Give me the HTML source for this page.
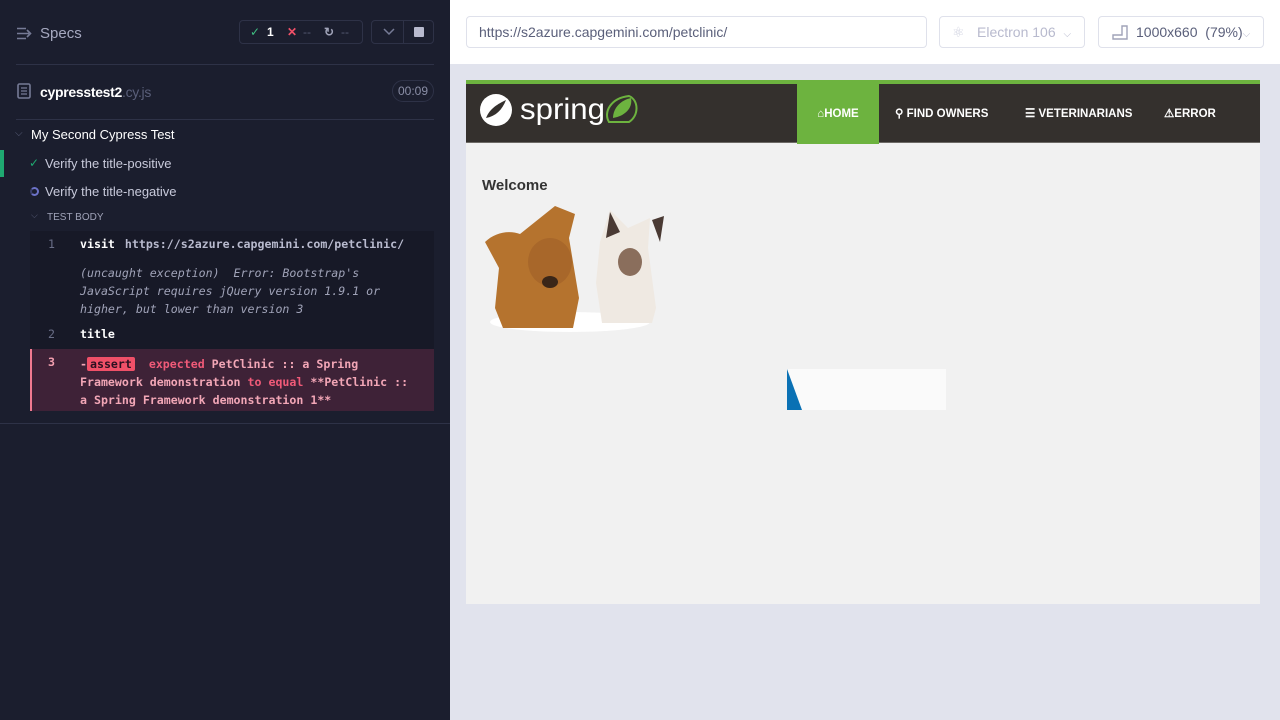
<!DOCTYPE html>
<html><head><meta charset="utf-8"><style>
*{box-sizing:border-box;margin:0;padding:0}
body{width:1280px;height:720px;overflow:hidden;font-family:"Liberation Sans",sans-serif;background:#e1e3ed;position:relative}
.left{position:absolute;left:0;top:0;width:450px;height:720px;background:#1b1e2e;color:#d0d2e0}
.abs{position:absolute}
.mono{font-family:"DejaVu Sans Mono","Liberation Mono",monospace;font-size:11.6px;font-weight:bold}
.line{background:#2e3247;height:1px;position:absolute}
.top{position:absolute;left:450px;top:0;width:830px;height:64px;background:#fff}
.box{position:absolute;border:1px solid #dfe1eb;border-radius:4px;background:#fff;font-size:14px;color:#5a5f7a;padding-left:12px;line-height:30px}
.nav{position:absolute;top:0;height:60px;line-height:60px;color:#fff;font-size:11.5px;font-weight:bold}
</style></head><body>
<div class="left">
 <svg class="abs" style="left:17px;top:27px" width="16" height="13" viewBox="0 0 16 13"><g stroke="#767b96" stroke-width="1.6" fill="none"><path d="M0 1.5h9M0 6.5h12M0 11.5h9M10 3l3.5 3.5L10 10"/></g></svg>
 <div class="abs" style="left:40px;top:25px;font-size:15px;color:#a6a9c0">Specs</div>
 <div class="abs" style="left:239px;top:20px;width:124px;height:24px;border:1px solid #2e3247;border-radius:4px;font-size:12px;line-height:22px">
  <span class="abs" style="left:10px;color:#3fbf82">✓</span><span class="abs" style="left:27px;color:#fff;font-weight:bold">1</span>
  <span class="abs" style="left:47px;color:#f05068;font-weight:bold">✕</span><span class="abs" style="left:63px;color:#555a72">--</span>
  <span class="abs" style="left:84px;color:#a0a3b8;font-weight:bold">↻</span><span class="abs" style="left:101px;color:#555a72">--</span>
 </div>
 <div class="abs" style="left:371px;top:20px;width:63px;height:24px;border:1px solid #2e3247;border-radius:4px">
  <div class="abs" style="left:31px;top:0;width:1px;height:22px;background:#2e3247"></div>
  <svg class="abs" style="left:11px;top:7px" width="12" height="8"><path d="M1 1l5 5 5-5" stroke="#767b96" stroke-width="1.5" fill="none"/></svg>
  <div class="abs" style="left:42px;top:6px;width:10px;height:10px;background:#b8bace;border-radius:1px"></div>
 </div>
 <div class="line" style="left:16px;top:64px;width:418px"></div>
 <svg class="abs" style="left:17px;top:83px" width="14" height="16"><rect x="1" y="1" width="12" height="14" rx="1.5" fill="none" stroke="#767b96" stroke-width="1.6"/><path d="M4 5h6M4 8h6M4 11h6" stroke="#767b96" stroke-width="1.3"/></svg>
 <div class="abs" style="left:40px;top:84px;font-size:14px;font-weight:bold;color:#fff;letter-spacing:-0.3px">cypresstest2<span style="color:#5a5f7a;font-weight:normal">.cy.js</span></div>
 <div class="abs" style="left:392px;top:80px;width:42px;height:22px;border:1px solid #2e3247;border-radius:11px;font-size:12px;color:#8a8ea6;text-align:center;line-height:20px">00:09</div>
 <div class="line" style="left:16px;top:119px;width:418px"></div>
 <div class="abs" style="left:15px;top:128px;color:#5a5f7a;font-size:10px">⌵</div>
 <div class="abs" style="left:31px;top:127px;font-size:13px;color:#fff">My Second Cypress Test</div>
 <div class="abs" style="left:0;top:150px;width:4px;height:27px;background:#1fa971"></div>
 <div class="abs" style="left:29px;top:156px;color:#1fa971;font-size:12px">✓</div>
 <div class="abs" style="left:45px;top:156px;font-size:13px;color:#c8cadb">Verify the title-positive</div>
 <div class="abs" style="left:30px;top:187px;width:9px;height:9px;border-radius:50%;border:2px solid #6c72c8;border-left-color:#3a3f6a"></div>
 <div class="abs" style="left:45px;top:184px;font-size:13px;color:#c8cadb">Verify the title-negative</div>
 <div class="abs" style="left:31px;top:210px;color:#5a5f7a;font-size:9px">⌵</div>
 <div class="abs" style="left:47px;top:212px;font-size:10px;color:#a0a3b8">TEST BODY</div>
 <div class="abs" style="left:30px;top:231px;width:404px;height:118px;background:#171927"></div>
 <div class="abs mono" style="left:48px;top:237px;color:#6a6f88;font-weight:normal">1</div>
 <div class="abs mono" style="left:80px;top:237px;color:#fff">visit <span style="color:#b8bace;margin-left:3px">https://s2azure.capgemini.com/petclinic/</span></div>
 <div class="abs mono" style="left:80px;top:264px;color:#a0a3b8;font-style:italic;font-weight:normal;line-height:18px;width:330px">(uncaught exception)&nbsp; Error: Bootstrap's JavaScript requires jQuery version 1.9.1 or higher, but lower than version 3</div>
 <div class="abs mono" style="left:48px;top:327px;color:#6a6f88;font-weight:normal">2</div>
 <div class="abs mono" style="left:80px;top:327px;color:#fff">title</div>
 <div class="abs" style="left:30px;top:349px;width:404px;height:62px;background:#3e2237;border-left:2px solid #f07a90"></div>
 <div class="abs mono" style="left:48px;top:355px;color:#f4a0b0">3</div>
 <div class="abs mono" style="left:80px;top:355px;color:#f2a6b6;line-height:18px;width:335px">-<span style="background:#f05068;color:#2a1020;padding:0 3px;border-radius:2px">assert</span>&nbsp; <span style="color:#f05a78">expected</span> PetClinic :: a Spring Framework demonstration <span style="color:#f05a78">to equal</span> **PetClinic :: a Spring Framework demonstration 1**</div>
 <div class="line" style="left:0;top:423px;width:450px"></div>
</div>
<div class="top">
 <div class="box" style="left:16px;top:16px;width:461px;height:32px">https://s2azure.capgemini.com/petclinic/</div>
 <div class="box" style="left:489px;top:16px;width:146px;height:32px;color:#b8bace;padding-left:37px">Electron 106 <span style="font-size:10px;margin-left:4px">⌵</span><span class="abs" style="left:12px;top:0;color:#d0d2e0">⚛</span></div>
 <div class="box" style="left:648px;top:16px;width:166px;height:32px;padding-left:37px">1000x660&nbsp; (79%)<span style="font-size:10px;color:#b8bace">⌵</span>
  <svg class="abs" style="left:13px;top:8px" width="16" height="15"><path d="M1 14h14V1h-5v9H1z" fill="none" stroke="#a0a3b8" stroke-width="1.4"/></svg></div>
</div>
<div class="abs" style="left:466px;top:80px;width:794px;height:524px;background:#f1f1f1">
 <div class="abs" style="left:0;top:0;width:794px;height:4px;background:#6db33f"></div>
 <div class="abs" style="left:0;top:4px;width:794px;height:59px;background:#34302d;border-bottom:1px solid #6d6a66"></div>
 <svg class="abs" style="left:12px;top:12px" width="180" height="36" viewBox="0 0 180 36">
  <circle cx="18" cy="18" r="16" fill="#fff"/><path d="M8 26c4-10 12-14 20-18-4 10-10 16-20 18z" fill="#34302d"/>
  <text x="42" y="27" font-family="Liberation Sans" font-size="30" fill="#fff" textLength="85" lengthAdjust="spacingAndGlyphs">spring</text>
  <path d="M131 30c-6-10 2-24 20-26 10 4 10 20 0 26z" fill="none" stroke="#6db33f" stroke-width="2"/><path d="M135 26c0-10 8-18 18-20 2 10-6 18-18 20z" fill="#6db33f"/>
 </svg>
 <div class="nav" style="left:331px;top:4px;width:82px;background:#6db33f;text-align:center">⌂HOME</div>
 <div class="nav" style="left:429px;top:4px">⚲ FIND OWNERS</div>
 <div class="nav" style="left:559px;top:4px">☰ VETERINARIANS</div>
 <div class="nav" style="left:698px;top:4px">⚠ERROR</div>
 <div class="abs" style="left:16px;top:97px;font-size:15px;font-weight:bold;color:#333">Welcome</div>
 <svg class="abs" style="left:14px;top:122px" width="190" height="132" viewBox="0 0 190 132">
  <ellipse cx="90" cy="120" rx="80" ry="10" fill="#fff"/>
  <path d="M120 40l10-32 18 18 22-10-2 30 8 60-4 15-50 0-6-40z" fill="#efe9e2"/>
  <path d="M130 10l10 20 -14 6z M172 18l12-4-4 26z" fill="#4a3a34"/>
  <ellipse cx="150" cy="60" rx="12" ry="14" fill="#8a6e5c"/>
  <path d="M5 40c10-10 25-12 35-8l35-28 20 8-6 24 10 60-6 30-70 0-8-20 4-40z" fill="#b5732e"/>
  <ellipse cx="70" cy="60" rx="22" ry="24" fill="#a8672a"/>
  <ellipse cx="70" cy="80" rx="8" ry="6" fill="#3a2618"/>
 </svg>
 <div class="abs" style="left:321px;top:289px;width:159px;height:41px;background:#fafafa"></div>
 <svg class="abs" style="left:321px;top:289px" width="16" height="41"><path d="M0 0L15 41H0z" fill="#0a71b4"/></svg>
</div>
</body></html>
